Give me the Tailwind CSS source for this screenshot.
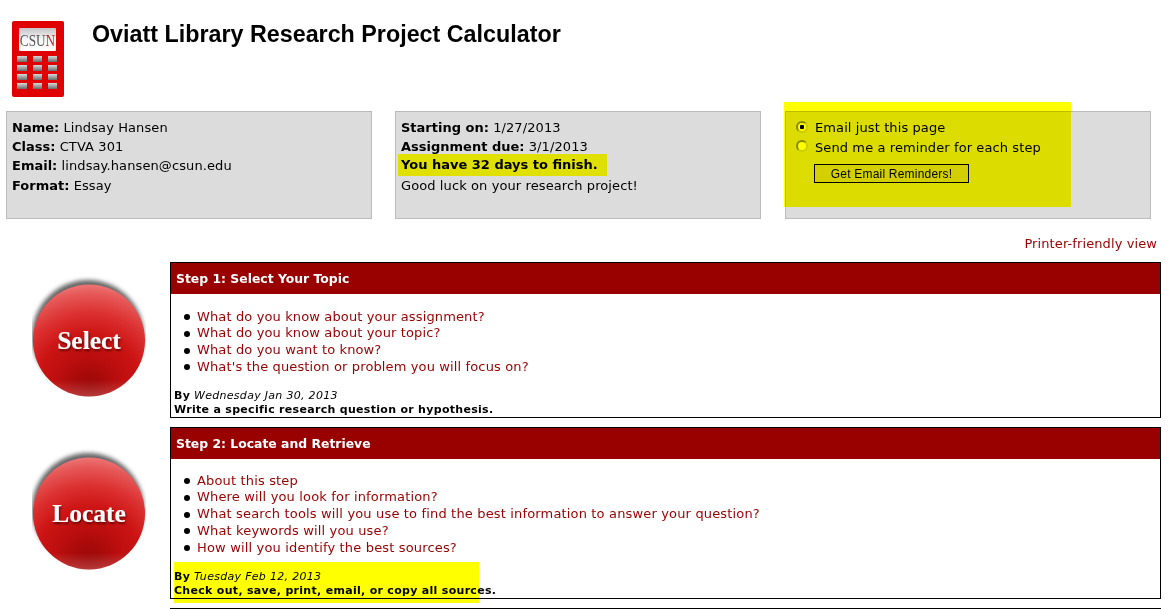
<!DOCTYPE html>
<html lang="en">
<head>
  <meta charset="UTF-8" />
  <title>Oviatt Library Research Project Calculator</title>
  <script src="https://cdn.jsdelivr.net/npm/@tailwindcss/browser@4"></script>
</head>
<body class="bg-white text-black font-['DejaVu_Sans',sans-serif] text-[13px] overflow-hidden h-[609px] relative">

  <header class="flex h-[111px]">
    <svg class="ml-[12px] mt-[21px] w-[52px] h-[76px]" viewBox="0 0 52 76">
      <defs>
        <linearGradient id="key" x1="0" y1="0" x2="0" y2="1"><stop offset="0" stop-color="#d8d8d8"/><stop offset="1" stop-color="#6a6a6a"/></linearGradient>
        <linearGradient id="scr" x1="0" y1="0" x2="0" y2="1"><stop offset="0" stop-color="#c4c4c4"/><stop offset="0.5" stop-color="#f6f6f6"/><stop offset="1" stop-color="#ffffff"/></linearGradient>
      </defs>
      <rect x="0" y="0" width="52" height="76" rx="2" fill="#e00000"/>
      <rect x="7" y="7" width="37" height="23" rx="1" fill="url(#scr)"/>
      <text transform="translate(25.5 25) scale(0.78 1)" text-anchor="middle" font-family="Liberation Serif" font-size="17" fill="#555">CSU<tspan fill="#b03030">N</tspan></text>
      <g fill="url(#key)">
        <rect x="5" y="35" width="10" height="6"/><rect x="21" y="35" width="9" height="6"/><rect x="36" y="35" width="9" height="6"/>
        <rect x="5" y="44" width="10" height="6"/><rect x="21" y="44" width="9" height="6"/><rect x="36" y="44" width="9" height="6"/>
        <rect x="5" y="53" width="10" height="6"/><rect x="21" y="53" width="9" height="6"/><rect x="36" y="53" width="9" height="6"/>
        <rect x="5" y="62" width="10" height="6"/><rect x="21" y="62" width="9" height="6"/><rect x="36" y="62" width="9" height="6"/>
      </g>
    </svg>
    <h1 class="ml-[28px] mt-[20px] font-['Liberation_Sans',sans-serif] font-bold text-[23.3px] leading-[28px]">Oviatt Library Research Project Calculator</h1>
  </header>

  <section class="flex pl-[6px] gap-[23px]">
    <div class="w-[366px] h-[108px] bg-[#dcdcdc] border border-[#bbbbbb] px-[5px] pt-[6px] leading-[19px] tracking-[0.1px]">
      <div><b class="tracking-normal">Name:</b> Lindsay Hansen</div>
      <div><b class="tracking-normal">Class:</b> CTVA 301</div>
      <div><b class="tracking-normal">Email:</b> lindsay.hansen@csun.edu</div>
      <div class="mt-px"><b class="tracking-normal">Format:</b> Essay</div>
    </div>
    <div class="w-[366px] h-[108px] bg-[#dcdcdc] border border-[#bbbbbb] px-[5px] pt-[6px] leading-[19px] tracking-[0.1px]">
      <div><b class="tracking-normal">Starting on:</b> 1/27/2013</div>
      <div><b class="tracking-normal">Assignment due:</b> 3/1/2013</div>
      <div class="w-[209px] h-[22px] -mt-[2px] -mb-px -ml-[3px] pl-[3px] bg-[#e0e000] font-bold leading-[22px] tracking-normal">You have 32 days to finish.</div>
      <div class="mt-px">Good luck on your research project!</div>
    </div>
    <div class="ml-px w-[366px] h-[108px] bg-[#dcdcdc] border border-[#bbbbbb] pl-[10px] pt-[6px] leading-[19px] tracking-[0.1px]">
      <div class="flex items-center"><input type="radio" name="m" checked class="appearance-none w-[12px] h-[12px] -mt-[2px] rounded-full bg-white border-2 border-[#888888] border-r-[#cccccc] border-b-[#cccccc] checked:bg-[radial-gradient(circle,#000_2px,#fff_2.5px)]" /><span class="ml-[7px]">Email just this page</span></div>
      <div class="flex items-center mt-[1px]"><input type="radio" name="m" class="appearance-none w-[12px] h-[12px] -mt-[3px] rounded-full bg-white border-2 border-[#888888] border-r-[#cccccc] border-b-[#cccccc]" /><span class="ml-[7px]">Send me a reminder for each step</span></div>
      <button class="block ml-[18px] mt-[7px] w-[155px] h-[19px] bg-[#d4d0c8] border border-black font-['Liberation_Sans',sans-serif] text-[12px] leading-[16px] tracking-[0.2px]">Get Email Reminders!</button>
    </div>
  </section>

  <div class="absolute left-[784px] top-[102px] w-[287px] h-[105px] bg-[#ffff00] mix-blend-multiply"></div>

  <div class="h-[43px] pr-[17px] pt-[15px] text-right tracking-[0.1px]"><a class="text-[#990000]">Printer-friendly view</a></div>

  <section class="flex flex-col gap-[9px]">
    <div class="flex">
      <div class="w-[170px] pl-[32px] pt-[13px]">
        <svg class="w-[114px] h-[125px]" viewBox="0 0 114 125">
          <defs>
            <radialGradient id="ball" gradientUnits="userSpaceOnUse" cx="57" cy="112" r="106">
              <stop offset="0" stop-color="#9c0808"/>
              <stop offset="0.14" stop-color="#a80a0a"/>
              <stop offset="0.3" stop-color="#bc0e0e"/>
              <stop offset="0.5" stop-color="#cc1414"/>
              <stop offset="0.7" stop-color="#dc3030"/>
              <stop offset="0.88" stop-color="#e65858"/>
              <stop offset="1" stop-color="#f08080"/>
            </radialGradient>
            <linearGradient id="rim" x1="0" y1="0" x2="0" y2="1"><stop offset="0.85" stop-color="#ffffff" stop-opacity="0"/><stop offset="1" stop-color="#ffffff" stop-opacity="0.2"/></linearGradient>
            <filter id="soft" x="-20%" y="-20%" width="140%" height="140%"><feGaussianBlur stdDeviation="2"/></filter>
            <filter id="txt" x="-20%" y="-40%" width="140%" height="180%"><feDropShadow dx="1" dy="2" stdDeviation="1.2" flood-color="#500000" flood-opacity="0.8"/></filter>
          </defs>
          <circle cx="56" cy="61" r="56" fill="#666666" filter="url(#soft)"/>
          <circle cx="57" cy="65.5" r="56" fill="url(#ball)"/>
          <circle cx="57" cy="65.5" r="56" fill="url(#rim)"/>
          <text x="57" y="74" text-anchor="middle" font-family="Liberation Serif" font-weight="bold" font-size="25.5" fill="#fff" filter="url(#txt)">Select</text>
        </svg>
      </div>
      <div class="w-[991px] h-[156px] border border-black">
        <h2 class="h-[31px] bg-[#990000] text-white font-bold text-[12.4px] leading-[31px] pl-[5px]">Step 1: Select Your Topic</h2>
        <ul class="mt-[14.5px] ml-[26px] list-none leading-[16.75px] text-[#990000] tracking-[0.13px]">
          <li class="relative before:absolute before:left-[-13px] before:top-[5.5px] before:size-[6px] before:rounded-full before:bg-black">What do you know about your assignment?</li>
          <li class="relative before:absolute before:left-[-13px] before:top-[5.5px] before:size-[6px] before:rounded-full before:bg-black">What do you know about your topic?</li>
          <li class="relative before:absolute before:left-[-13px] before:top-[5.5px] before:size-[6px] before:rounded-full before:bg-black">What do you want to know?</li>
          <li class="relative before:absolute before:left-[-13px] before:top-[5.5px] before:size-[6px] before:rounded-full before:bg-black">What's the question or problem you will focus on?</li>
        </ul>
        <p class="mt-[13.5px] ml-[3px] text-[11px] leading-[14px] tracking-[0.3px]"><b>By</b> <i>Wednesday Jan 30, 2013</i><br /><b>Write a specific research question or hypothesis.</b></p>
      </div>
    </div>
    <div class="flex">
      <div class="w-[170px] pl-[32px] pt-[21px]">
        <svg class="w-[114px] h-[125px]" viewBox="0 0 114 125">
          <circle cx="56" cy="61" r="56" fill="#666666" filter="url(#soft)"/>
          <circle cx="57" cy="65.5" r="56" fill="url(#ball)"/>
          <circle cx="57" cy="65.5" r="56" fill="url(#rim)"/>
          <text x="57" y="74" text-anchor="middle" font-family="Liberation Serif" font-weight="bold" font-size="25.5" fill="#fff" filter="url(#txt)">Locate</text>
        </svg>
      </div>
      <div class="w-[991px] h-[172px] border border-black">
        <h2 class="h-[31px] bg-[#990000] text-white font-bold text-[12.4px] leading-[31px] pl-[5px]">Step 2: Locate and Retrieve</h2>
        <ul class="mt-[13.5px] ml-[26px] list-none leading-[16.75px] text-[#990000] tracking-[0.16px]">
          <li class="relative before:absolute before:left-[-13px] before:top-[5.5px] before:size-[6px] before:rounded-full before:bg-black">About this step</li>
          <li class="relative before:absolute before:left-[-13px] before:top-[5.5px] before:size-[6px] before:rounded-full before:bg-black">Where will you look for information?</li>
          <li class="relative before:absolute before:left-[-13px] before:top-[5.5px] before:size-[6px] before:rounded-full before:bg-black">What search tools will you use to find the best information to answer your question?</li>
          <li class="relative before:absolute before:left-[-13px] before:top-[5.5px] before:size-[6px] before:rounded-full before:bg-black">What keywords will you use?</li>
          <li class="relative before:absolute before:left-[-13px] before:top-[5.5px] before:size-[6px] before:rounded-full before:bg-black">How will you identify the best sources?</li>
        </ul>
        <p class="mt-[13.5px] ml-[3px] text-[11px] leading-[14px] tracking-[0.3px]"><b>By</b> <i>Tuesday Feb 12, 2013</i><br /><b>Check out, save, print, email, or copy all sources.</b></p>
      </div>
    </div>
    <div class="ml-[170px] w-[991px] h-[20px] border-t border-black"></div>
  </section>

  <div class="absolute left-[174px] top-[562px] w-[305px] h-[41px] bg-[#ffff00] mix-blend-multiply"></div>
</body>
</html>
